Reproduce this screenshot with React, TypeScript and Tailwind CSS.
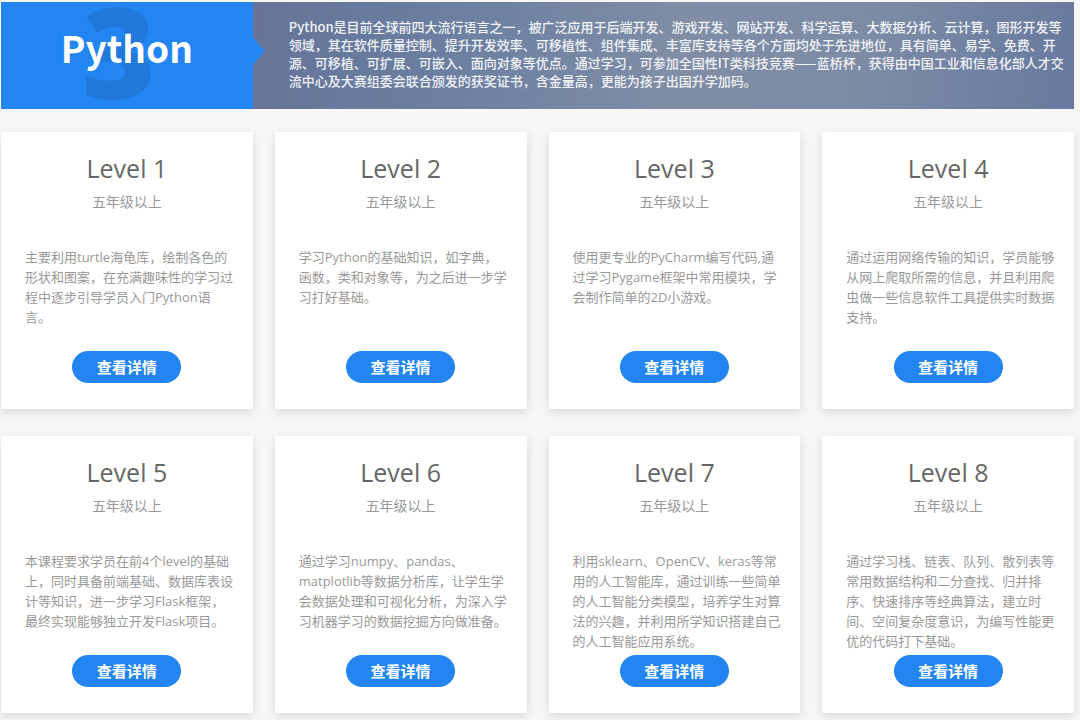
interface Course {
  level: number;
  grade: string;
  description: string;
}

const courses: Course[] = [
  {
    level: 1,
    grade: "五年级以上",
    description: "主要利用turtle海龟库，绘制各色的\n形状和图案，在充满趣味性的学习过\n程中逐步引导学员入门Python语\n言。",
  },
  {
    level: 2,
    grade: "五年级以上",
    description: "学习Python的基础知识，如字典，\n函数，类和对象等，为之后进一步学\n习打好基础。",
  },
  {
    level: 3,
    grade: "五年级以上",
    description: "使用更专业的PyCharm编写代码,通\n过学习Pygame框架中常用模块，学\n会制作简单的2D小游戏。",
  },
  {
    level: 4,
    grade: "五年级以上",
    description: "通过运用网络传输的知识，学员能够\n从网上爬取所需的信息，并且利用爬\n虫做一些信息软件工具提供实时数据\n支持。",
  },
  {
    level: 5,
    grade: "五年级以上",
    description: "本课程要求学员在前4个level的基础\n上，同时具备前端基础、数据库表设\n计等知识，进一步学习Flask框架，\n最终实现能够独立开发Flask项目。",
  },
  {
    level: 6,
    grade: "五年级以上",
    description: "通过学习numpy、pandas、\nmatplotlib等数据分析库，让学生学\n会数据处理和可视化分析，为深入学\n习机器学习的数据挖掘方向做准备。",
  },
  {
    level: 7,
    grade: "五年级以上",
    description: "利用sklearn、OpenCV、keras等常\n用的人工智能库，通过训练一些简单\n的人工智能分类模型，培养学生对算\n法的兴趣，并利用所学知识搭建自己\n的人工智能应用系统。",
  },
  {
    level: 8,
    grade: "五年级以上",
    description: "通过学习栈、链表、队列、散列表等\n常用数据结构和二分查找、归并排\n序、快速排序等经典算法，建立时\n间、空间复杂度意识，为编写性能更\n优的代码打下基础。",
  },
];

const intro =
  "Python是目前全球前四大流行语言之一，被广泛应用于后端开发、游戏开发、网站开发、科学运算、大数据分析、云计算，图形开发等\n领域，其在软件质量控制、提升开发效率、可移植性、组件集成、丰富库支持等各个方面均处于先进地位，具有简单、易学、免费、开\n源、可移植、可扩展、可嵌入、面向对象等优点。通过学习，可参加全国性IT类科技竞赛——蓝桥杯，获得由中国工业和信息化部人才交\n流中心及大赛组委会联合颁发的获奖证书，含金量高，更能为孩子出国升学加码。";

function Banner() {
  return (
    <header className="grid grid-cols-4 gap-x-[22px] bg-[linear-gradient(100deg,#686e92_18%,#67799c_32%,#6f82a2_46%,#7f8da5_62%,#7d8ca5_80%,#7282a2_90%,#69799e_100%)] [font-family:'Noto_Sans_CJK_SC',sans-serif]">
      <div className="relative flex h-[107px] items-center justify-center bg-[#2285f2]">
        <span
          aria-hidden="true"
          className="absolute inset-0 flex items-center justify-center pr-4 pb-3 text-[126px] leading-none font-extrabold text-[#1f78da] [font-family:'Open_Sans',sans-serif]"
        >
          3
        </span>
        <h1 className="relative pb-4 text-[37px] leading-none font-bold text-white">Python</h1>
        <svg
          aria-hidden="true"
          viewBox="0 0 12 28"
          className="absolute top-[35px] left-full h-7 w-3 fill-[#2285f2]"
        >
          <path d="M0 0 12 14 0 28Z" />
        </svg>
      </div>
      <p className="col-span-3 self-center pb-1 pl-[14px] text-[13px] leading-[18px] font-medium whitespace-pre text-[#f0f3f8]">
        {intro}
      </p>
    </header>
  );
}

function CourseCard({ course }: { course: Course }) {
  return (
    <article className="flex h-[277px] flex-col items-center bg-white px-6 pt-5 pb-[26px] shadow-[0_3px_10px_rgba(0,0,0,0.13)]">
      <h2 className="text-[25px] leading-8 text-[#666]">Level {course.level}</h2>
      <p className="mt-2 text-[14px] leading-5 text-[#999]">{course.grade}</p>
      <p className="mt-[35px] self-stretch text-[13px] leading-5 whitespace-pre text-[#999]">
        {course.description}
      </p>
      <button
        type="button"
        className="mt-auto h-8 w-[109px] shrink-0 rounded-2xl bg-[#2285f2] text-[15px] leading-none font-bold text-white"
      >
        查看详情
      </button>
    </article>
  );
}

export default function App() {
  return (
    <div className="min-h-screen bg-[#f7f7f7] pt-0.5 pr-1.5 pb-1.5 pl-px [font-family:'Open_Sans','Noto_Sans_CJK_SC',sans-serif]">
      <Banner />
      <main className="mt-[23px] grid grid-cols-4 gap-x-[22px] gap-y-[27px]">
        {courses.map((course) => (
          <CourseCard key={course.level} course={course} />
        ))}
      </main>
    </div>
  );
}
